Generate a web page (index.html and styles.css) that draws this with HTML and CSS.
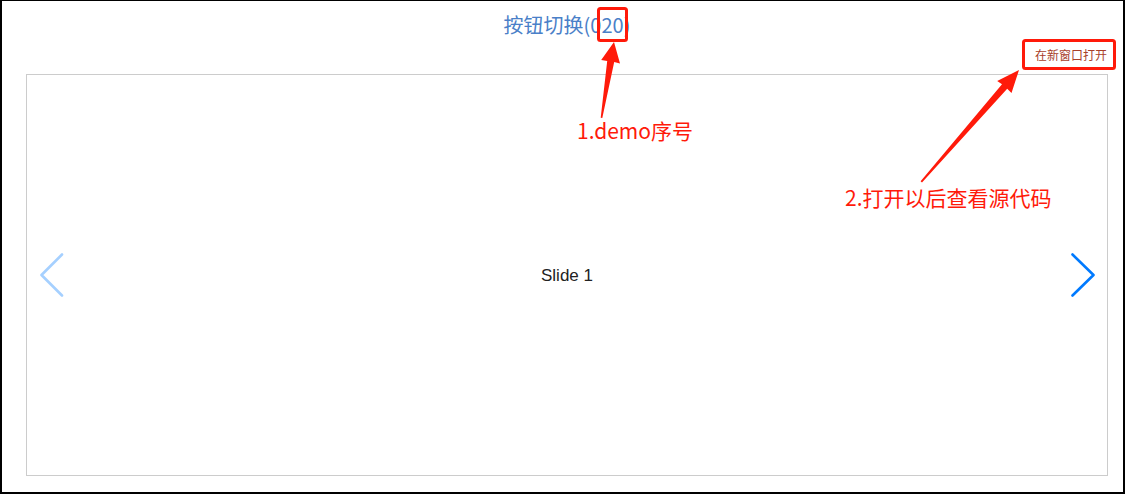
FILE: index.html
```html
<!DOCTYPE html>
<html lang="zh">
<head>
<meta charset="utf-8">
<title>按钮切换</title>
<link rel="stylesheet" href="styles.css">
</head>
<body>
<div class="frame">
  <h1 class="title">按钮切换(020)</h1>
  <div class="link-row"><a class="open-link" href="#">在新窗口打开</a></div>
  <div class="slider">
    <div class="slide">Slide 1</div>
    <svg class="nav nav-prev" width="27" height="44" viewBox="0 0 27 44"><polyline points="23,1.5 2.5,22 23,42.5" fill="none" stroke="#007aff" stroke-width="2.6" stroke-linecap="round" stroke-linejoin="round"/></svg>
    <svg class="nav nav-next" width="27" height="44" viewBox="0 0 27 44"><polyline points="2.5,1.5 23.5,22 2.5,42.5" fill="none" stroke="#007aff" stroke-width="2.6" stroke-linecap="round" stroke-linejoin="round"/></svg>
  </div>
  <svg class="annot-svg" width="1125" height="494" viewBox="0 0 1125 494">
    <rect x="598.5" y="8.5" width="28" height="32" rx="2" fill="none" stroke="#ff1a0a" stroke-width="3"/>
    <rect x="1023.5" y="40.5" width="91" height="28" rx="2" fill="none" stroke="#ff1a0a" stroke-width="3"/>
    <polygon points="614,42 620,63.5 614.2,62 602.3,118 600.7,117.8 607.2,61 601.2,60" fill="#ff1a0a"/>
    <polygon points="1019,70 1011.5,93 1007.2,88.8 922,182.5 920.6,181.2 1002,84.2 997.2,81" fill="#ff1a0a"/>
  </svg>
  <div class="annot annot-1">1.demo序号</div>
  <div class="annot annot-2">2.打开以后查看源代码</div>
</div>
</body>
</html>
```

FILE: styles.css
```css
html, body {
  margin: 0;
  padding: 0;
  background: #fff;
}

.frame {
  position: relative;
  box-sizing: border-box;
  width: 1125px;
  height: 494px;
  border-style: solid;
  border-color: #000;
  border-width: 1px 2px 2px 2px;
  padding: 0 15px 0 24px;
  display: flex;
  flex-direction: column;
  font-family: "Noto Sans CJK SC", "Noto Sans", sans-serif;
}

.title {
  margin: 0;
  height: 46px;
  line-height: 48px;
  font-size: 20px;
  font-weight: normal;
  color: #4a80c8;
  text-align: center;
}

.link-row {
  display: flex;
  justify-content: flex-end;
  height: 16px;
  line-height: 16px;
  margin-bottom: 11px;
  padding-right: 1px;
}

.open-link {
  font-size: 12px;
  color: #a8402a;
  text-decoration: none;
}

.slider {
  position: relative;
  box-sizing: border-box;
  height: 402px;
  border: 1px solid #cccccc;
  display: flex;
  align-items: center;
  justify-content: center;
}

.slide {
  font-family: "Liberation Sans", Arial, sans-serif;
  font-size: 17px;
  color: #222;
  margin-top: 1px;
}

.nav {
  position: absolute;
  top: 178px;
}

.nav-prev {
  left: 12px;
  opacity: 0.35;
}

.nav-next {
  right: 10px;
}

.annot-svg {
  position: absolute;
  left: -2px;
  top: -1px;
  pointer-events: none;
}

.annot {
  position: absolute;
  font-size: 21px;
  line-height: 28px;
  color: #ff1a0a;
  white-space: nowrap;
}

.annot-1 {
  left: 575px;
  top: 115px;
}

.annot-2 {
  left: 843px;
  top: 182px;
}
```
